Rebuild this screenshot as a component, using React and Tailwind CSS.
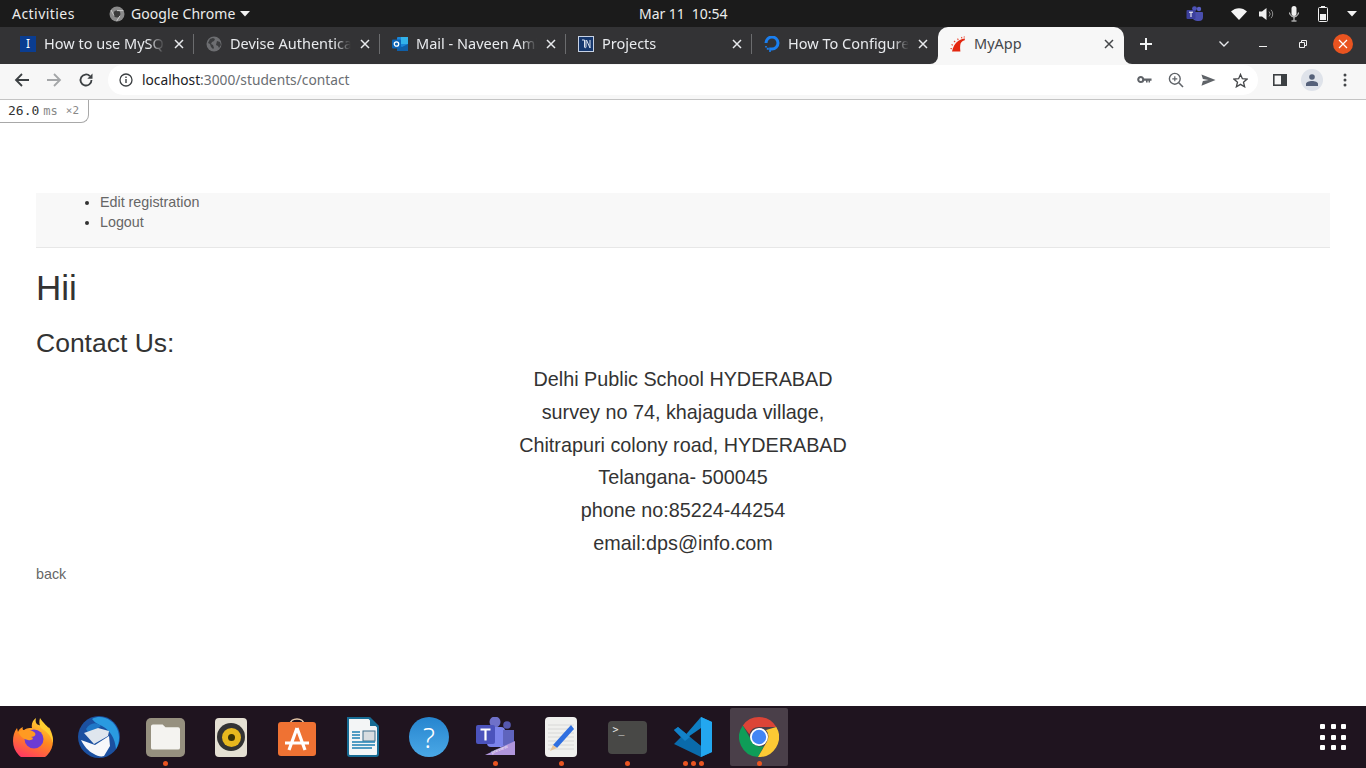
import React from "react";

const ui = { fontFamily: '"Noto Sans", "Open Sans", sans-serif' };
const page = { fontFamily: '"Liberation Sans", Arial, sans-serif' };

const Rails = () => (
  <svg viewBox="0 0 16 16" className="h-4 w-4">
    <path d="M2 15.5C3 11 5 7 8.5 4.8 10.5 3.6 12.5 3 15 2.6l-.3 1.6C12.6 4.8 11.3 5.8 10.6 7.5 10 9.7 10 12.5 10.4 15.5z" fill="#e3260f" />
    <path d="M4 5l1.2 1.2M7.5 2.6l.8 1.3M11.5 1l.4 1.4M1.5 8.5l1.4.7M0.5 12.5l1.5.3M14 .5l.4 1" stroke="#e8442f" strokeWidth="1.1" />
  </svg>
);
const Fav1 = () => (
  <div className="flex h-4 w-4 items-center justify-center bg-[#0a3d91] text-[12px] leading-none text-white">I</div>
);
const Globe = () => (
  <svg viewBox="0 0 16 16" className="h-4 w-4">
    <circle cx="8" cy="8" r="7.5" fill="#6d6e71" />
    <path d="M4 3l3-1 2 1-1 2-2 1-1 2 2 1 1 3-1 1-2-2-1-3-2-1zM11 5l3 1 1 3-2 3-1-2-2-1z" fill="#3b3c3e" />
  </svg>
);
const Outlook = () => (
  <svg viewBox="0 0 16 16" className="h-4 w-4">
    <rect x="5" y="1" width="11" height="14" rx="1" fill="#1a86d8" />
    <path d="M9 1h7v7H9z" fill="#32b2ea" />
    <path d="M5 8l5 3 6-3v7H5z" fill="#0f5fa8" />
    <rect x="0" y="3.5" width="9" height="9" rx="1" fill="#0b63b5" />
    <circle cx="4.5" cy="8" r="2.2" fill="none" stroke="#fff" strokeWidth="1.3" />
  </svg>
);
const Notion = () => (
  <svg viewBox="0 0 16 16" className="h-4 w-4">
    <rect x="0.5" y="0.5" width="15" height="15" fill="#16386e" stroke="#c7d2e4" />
    <path d="M4 4h2.5v7c0 1 1.5 1 1.5 0V4M8.5 4l3.5 8V4" fill="none" stroke="#dfe6f2" strokeWidth="1" />
  </svg>
);
const DO = () => (
  <svg viewBox="0 0 16 16" className="h-4 w-4">
    <path d="M8 14.5v-3a4.5 4.5 0 1 0-4.5-4.5H.5A7.5 7.5 0 1 1 8 14.5z" fill="#1a7ff0" />
    <path d="M5.2 11.5H8v3H5.2zM2.8 11.8h2v2h-2zM5.2 14.2h1.6V16H5.2zM1.2 10H2.8v1.6H1.2z" fill="#1a7ff0" />
  </svg>
);
const TabClose = ({ dark }) => (
  <svg viewBox="0 0 10 10" className="h-[10px] w-[10px]">
    <path d="M1 1l8 8M9 1l-8 8" stroke={dark ? "#45474a" : "#e8eaed"} strokeWidth="1.5" />
  </svg>
);

const tabs = [
  { t: "How to use MySQL with Rails", i: <Fav1 /> },
  { t: "Devise Authentication in Rails", i: <Globe /> },
  { t: "Mail - Naveen Ambati - Outlook", i: <Outlook /> },
  { t: "Projects", i: <Notion /> },
  { t: "How To Configure Devise", i: <DO /> },
];

function Tab({ t, i, last }) {
  return (
    <div className="relative flex h-[37px] w-[186px] shrink-0 items-center pb-[3px] pl-3">
      <div className="shrink-0">{i}</div>
      <div className="ml-2 w-[122px] -translate-y-px overflow-hidden whitespace-nowrap text-[14.5px] leading-5 text-[#e8eaed] [mask-image:linear-gradient(to_right,black_86%,transparent_99%)]">{t}</div>
      <div className="ml-2 flex w-[10px] items-center"><TabClose /></div>
      {!last && <div className="absolute right-0 top-[7px] h-[20px] w-px bg-[#6b6c6e]" />}
    </div>
  );
}

function Caret({ className }) {
  return (
    <svg viewBox="0 0 10 6" className={className}>
      <path d="M0 0h10L5 5.5z" fill="#f2f2f2" />
    </svg>
  );
}

function TopBar() {
  return (
    <div style={ui} className="relative flex h-[27px] shrink-0 items-center bg-[#1b1b1b] text-[14px] text-[#ececec]">
      <span className="ml-3 w-[97px] tracking-[0.45px]">Activities</span>
      <svg viewBox="0 0 16 16" className="h-4 w-4">
        <circle cx="8" cy="8" r="7.5" fill="#8a8a8a" />
        <circle cx="8" cy="8" r="3.4" fill="#3b3b3b" />
        <path d="M8 4.6h6.4M5 9.7L2 4M11 9.7l-3.4 5.5" stroke="#c9c9c9" strokeWidth="1" />
      </svg>
      <span className="ml-[6px] tracking-[0.08px]">Google Chrome</span>
      <Caret className="ml-[5px] h-[6px] w-[10px]" />
      <span className="absolute left-[639px] top-[3px] tracking-[-0.05px]">Mar 11&nbsp;&nbsp;10:54</span>
      <div className="ml-auto flex items-center">
        <svg viewBox="0 0 18 16" className="h-[16px] w-[18px]">
          <circle cx="13" cy="3" r="2.2" fill="#5a5fc4" />
          <circle cx="8.5" cy="2.6" r="2.4" fill="#4d52b8" />
          <path d="M6 6h10a1 1 0 0 1 1 1v4a4 4 0 0 1-4 4h-2a5 5 0 0 1-5-5z" fill="#4a4fae" />
          <rect x="0.5" y="4" width="9" height="9" rx="1" fill="#3c409c" />
          <path d="M3 6.2h4M5 6.2v4.8" stroke="#fff" strokeWidth="1" />
        </svg>
        <svg viewBox="0 0 16 12" className="ml-[27px] h-[12px] w-[16px]">
          <path d="M0 3.5C4.5-1 11.5-1 16 3.5L8 12z" fill="#f4f4f4" />
        </svg>
        <svg viewBox="0 0 16 14" className="ml-[12px] h-[14px] w-[16px]">
          <path d="M0 4.5h3L7.5 1v12L3 9.5H0z" fill="#f0f0f0" />
          <path d="M10 4.5a3.5 3.5 0 0 1 0 5M12 2.8a6 6 0 0 1 0 8.4" stroke="#8e8e8e" fill="none" strokeWidth="1" />
        </svg>
        <svg viewBox="0 0 10 16" className="ml-[14px] h-[16px] w-[10px]">
          <rect x="2.5" y="0" width="5" height="10" rx="2.5" fill="#f0f0f0" />
          <path d="M0.6 6.5a4.4 4.4 0 0 0 8.8 0M5 11v3.5M2.5 15h5" stroke="#f0f0f0" fill="none" strokeWidth="1" />
        </svg>
        <svg viewBox="0 0 10 16" className="ml-[19px] h-[16px] w-[10px]">
          <rect x="3" y="0" width="4" height="2" fill="#f0f0f0" />
          <rect x="0.5" y="1.5" width="9" height="14" rx="1" fill="none" stroke="#f0f0f0" />
          <rect x="2" y="8" width="6" height="6" fill="#f0f0f0" />
        </svg>
        <Caret className="ml-[19px] mr-[9px] h-[6px] w-[10px]" />
      </div>
    </div>
  );
}

function TabBar() {
  return (
    <div style={ui} className="flex h-[37px] shrink-0 items-start bg-[#333335] pl-2">
      {tabs.map((x, n) => (
        <Tab key={n} {...x} last={n === 4} />
      ))}
      <div className="relative flex h-[37px] w-[186px] shrink-0 items-center rounded-t-[10px] bg-[#f7f7f7] pb-[3px] pl-3">
        <div className="absolute bottom-0 left-[-8px] h-2 w-2 bg-[#f7f7f7]"><div className="h-full w-full rounded-br-[8px] bg-[#333335]" /></div>
        <div className="absolute bottom-0 right-[-8px] h-2 w-2 bg-[#f7f7f7]"><div className="h-full w-full rounded-bl-[8px] bg-[#333335]" /></div>
        <Rails />
        <div className="ml-2 w-[122px] -translate-y-px text-[14.5px] leading-5 text-[#45474a]">MyApp</div>
        <div className="ml-2 flex w-[10px]"><TabClose dark /></div>
      </div>
      <div className="ml-4 flex h-[34px] w-[14px] items-center">
        <svg viewBox="0 0 12 12" className="h-3 w-3"><path d="M6 0v12M0 6h12" stroke="#f1f3f4" strokeWidth="2" /></svg>
      </div>
      <div className="ml-[65px] flex h-[34px] items-center">
        <svg viewBox="0 0 10 6" className="h-[6px] w-[10px]"><path d="M0.5 0.5L5 5l4.5-4.5" fill="none" stroke="#e8eaed" strokeWidth="1.4" /></svg>
      </div>
      <div className="ml-[30px] flex h-[34px] items-center pt-[5px]">
        <div className="h-px w-2 bg-[#f0f0f0]" />
      </div>
      <div className="ml-[32px] flex h-[34px] items-center">
        <svg viewBox="0 0 8 8" className="h-2 w-2"><path d="M0.5 2.5h5v5h-5zM2.5 2.5V0.5h5v5h-2" fill="none" stroke="#f0f0f0" strokeWidth="1" /></svg>
      </div>
      <div className="ml-[26px] mt-[7px] flex h-5 w-5 items-center justify-center rounded-full bg-[#e95420]">
        <svg viewBox="0 0 10 10" className="h-[10px] w-[10px]"><path d="M1 1l8 8M9 1l-8 8" stroke="#fff" strokeWidth="1.2" /></svg>
      </div>
    </div>
  );
}

const OmniSlot = ({ children }) => <div className="flex h-[30px] w-8 items-center justify-center">{children}</div>;

function Toolbar() {
  const c = "#5f6368";
  return (
    <div style={ui} className="flex h-[36px] shrink-0 items-center border-b border-[#c4c4c4] bg-[#f7f7f7] pb-1 pt-px">
      <svg viewBox="0 0 16 16" className="ml-[14px] h-4 w-4"><path d="M15 8H2M8 2L2 8l6 6" fill="none" stroke="#3c4043" strokeWidth="1.8" /></svg>
      <svg viewBox="0 0 16 16" className="ml-4 h-4 w-4"><path d="M1 8h13M8 2l6 6-6 6" fill="none" stroke="#a4a6a8" strokeWidth="1.8" /></svg>
      <svg viewBox="0 0 16 16" className="ml-4 h-4 w-4">
        <path d="M13.5 8a5.5 5.5 0 1 1-1.6-3.9" fill="none" stroke="#3c4043" strokeWidth="1.8" />
        <path d="M14.5 1.5v5.2H9.3z" fill="#3c4043" />
      </svg>
      <div className="ml-[14px] flex h-[30px] w-[1150px] items-center rounded-full bg-white pl-[11px]">
        <svg viewBox="0 0 14 14" className="h-[14px] w-[14px]">
          <circle cx="7" cy="7" r="6" fill="none" stroke="#3c4043" strokeWidth="1.3" />
          <path d="M7 6v4M7 3.6v1.4" stroke="#3c4043" strokeWidth="1.4" />
        </svg>
        <span className="ml-[9px] text-[13.75px] text-[#202124]">localhost<span className="text-[#6a6e72]">:3000/students/contact</span></span>
        <div className="ml-auto mr-[2px] flex items-center">
          <OmniSlot>
            <svg viewBox="0 0 16 10" className="h-[10px] w-[15px]">
              <circle cx="4" cy="4.5" r="2.7" fill="none" stroke={c} strokeWidth="2.2" />
              <path d="M6 3.5h9.5v2.2h-1.6v2h-1.6v-2h-1v2H9.6v-2H6z" fill={c} />
            </svg>
          </OmniSlot>
          <OmniSlot>
            <svg viewBox="0 0 16 16" className="h-4 w-4">
              <circle cx="6.8" cy="6.8" r="5.4" fill="none" stroke={c} strokeWidth="1.4" />
              <path d="M10.8 10.8L15 15" stroke={c} strokeWidth="1.6" />
              <path d="M6.8 4.3v5M4.3 6.8h5" stroke={c} strokeWidth="1.2" />
            </svg>
          </OmniSlot>
          <OmniSlot>
            <svg viewBox="0 0 16 12" className="h-[12px] w-[15px]"><path d="M0.5 0L15.5 6 0.5 12l1.5-5 6-1-6-1z" fill={c} /></svg>
          </OmniSlot>
          <OmniSlot>
            <svg viewBox="0 0 16 16" className="h-[15px] w-[15px]"><path d="M8 1.5l2 4.6 5 .4-3.8 3.3 1.2 4.9L8 12.1l-4.4 2.6 1.2-4.9L1 6.5l5-.4z" fill="none" stroke="#45474a" strokeWidth="1.4" /></svg>
          </OmniSlot>
        </div>
      </div>
      <svg viewBox="0 0 14 12" className="ml-[15px] h-[12px] w-[14px]">
        <rect x="0.8" y="0.8" width="12.4" height="10.4" fill="none" stroke="#3c4043" strokeWidth="1.6" />
        <rect x="8" y="1" width="5" height="10" fill="#3c4043" />
      </svg>
      <div className="ml-[14px] flex h-[22px] w-[22px] items-center justify-center rounded-full bg-[#dfe3ea]">
        <svg viewBox="0 0 12 12" className="h-3 w-3">
          <circle cx="6" cy="3" r="2.8" fill="#55617a" />
          <path d="M0 12V10c0-2 3-3 6-3s6 1 6 3v2z" fill="#55617a" />
        </svg>
      </div>
      <svg viewBox="0 0 4 14" className="ml-5 h-[14px] w-[4px]">
        <circle cx="2" cy="2" r="1.5" fill="#45474a" /><circle cx="2" cy="7" r="1.5" fill="#45474a" /><circle cx="2" cy="12" r="1.5" fill="#45474a" />
      </svg>
    </div>
  );
}

const DockIcon = ({ children, dots = 0, active }) => (
  <div className={`relative mx-1 flex h-[58px] w-[58px] shrink-0 items-center justify-center ${active ? "rounded-[2px] bg-[#4a3f49]" : ""}`}>
    {children}
    {dots > 0 && (
      <div className="absolute bottom-0 flex gap-[3px]">
        {Array.from({ length: dots }).map((_, i) => (
          <span key={i} className="h-[5px] w-[5px] rounded-full bg-[#e95420]" />
        ))}
      </div>
    )}
  </div>
);

function Dock() {
  return (
    <div className="flex h-[62px] shrink-0 items-center bg-[#1f141f]">
      <DockIcon>
        <svg viewBox="0 0 40 40" className="h-10 w-10">
          <defs>
            <linearGradient id="ffa" x1="0.7" y1="0" x2="0.3" y2="1">
              <stop offset="0" stopColor="#ffdc3a" />
              <stop offset="0.45" stopColor="#ff8a1e" />
              <stop offset="1" stopColor="#ff2f6a" />
            </linearGradient>
          </defs>
          <path d="M23 1c-1 4 0 6 3 7 4 2 6 0 8 1 1 3 2 0 3 3 2 4 3 8 3 12a20 20 0 0 1-40 0c0-5 1-9 4-13l1 4c1-3 3-4 5-5-1 2 0 3 1 3 3-2 5-2 8-2-1-4 1-8 4-10z" fill="url(#ffa)" />
          <path d="M27 1c3 5 8 8 11 15 2 4 2 8 2 10-2-8-7-12-12-15-2-3-2-7-1-10z" fill="#ffcf30" />
          <circle cx="21" cy="22" r="9.5" fill="#6b3bd4" />
          <path d="M5 15c5-3 12-3 16 0 3 2 1 5-3 5 4 1 1 4-3 3-5-1-8-4-10-8z" fill="#ff9a22" />
        </svg>
      </DockIcon>
      <DockIcon>
        <svg viewBox="0 0 42 42" className="h-[42px] w-[42px]">
          <circle cx="21" cy="21" r="21" fill="#1b50a0" />
          <path d="M14 3c9-5 22 0 26 12 2 7 1 13-2 18-1-11-6-19-14-23-4-2-7-3-10-7z" fill="#2a9ae0" />
          <path d="M8 13c3-5 8-7 12-5l3 2-12 8z" fill="#1f78c8" />
          <path d="M6 17l14-5 11 3-1 5-14 8z" fill="#dfe6ee" />
          <path d="M3 24l14 5 14-9 1 10-6 10c-3 1-7 0-10-2-6-3-10-8-13-14z" fill="#f7f8fa" />
        </svg>
      </DockIcon>
      <DockIcon dots={1}>
        <div className="flex h-[39px] w-[39px] items-center justify-center rounded-[5px] bg-[#96907f]">
          <svg viewBox="0 0 30 26" className="h-[26px] w-[29px]">
            <path d="M2 0h10l3 3h13a2 2 0 0 1 2 2v19a2 2 0 0 1-2 2H2a2 2 0 0 1-2-2V2a2 2 0 0 1 2-2z" fill="#f4f3f0" />
          </svg>
        </div>
      </DockIcon>
      <DockIcon>
        <div className="flex h-[39px] w-8 items-center justify-center rounded-[4px] bg-[#e5e0d3]">
          <div className="flex h-7 w-7 items-center justify-center rounded-full bg-[#333]">
            <div className="flex h-[19px] w-[19px] items-center justify-center rounded-full bg-[#e8b81e]">
              <div className="h-[7px] w-[7px] rounded-full bg-[#3a3205]" />
            </div>
          </div>
        </div>
      </DockIcon>
      <DockIcon>
        <svg viewBox="0 0 40 40" className="h-10 w-10">
          <path d="M13 8c0-8 14-8 14 0" fill="none" stroke="#e8c9a8" strokeWidth="1.6" />
          <rect x="1" y="5" width="38" height="34" rx="3" fill="#ef7233" />
          <path d="M20 11l-8 22M20 11l8 22M8 26h24" stroke="#fff" strokeWidth="3.2" fill="none" />
        </svg>
      </DockIcon>
      <DockIcon>
        <svg viewBox="0 0 32 40" className="h-10 w-8">
          <path d="M1 1h21l9 9v27a2 2 0 0 1-2 2H3a2 2 0 0 1-2-2z" fill="#f3f5f6" stroke="#176c94" strokeWidth="2" />
          <path d="M23 0l9 9h-9z" fill="#176c94" />
          <rect x="16" y="14" width="12" height="10" fill="#d8dde0" stroke="#3f6f8a" />
          <path d="M5 15h8M5 18h8M5 21h8M5 25h23M5 28h23M5 31h20" stroke="#1c7fb3" strokeWidth="1.6" />
        </svg>
      </DockIcon>
      <DockIcon>
        <div style={ui} className="flex h-10 w-10 items-center justify-center rounded-full bg-linear-to-b from-[#2585cf] to-[#4aa8e6] text-[28px] font-light leading-none text-white">?</div>
      </DockIcon>
      <DockIcon dots={1}>
        <svg viewBox="0 0 40 40" className="h-10 w-10">
          <circle cx="20" cy="5" r="5.5" fill="#6f71c9" />
          <circle cx="32" cy="8" r="3.8" fill="#5558af" />
          <rect x="12" y="10" width="18" height="20" rx="4" fill="#7b83eb" />
          <path d="M28 13h11v12a6 6 0 0 1-11 3z" fill="#5f64bd" />
          <rect x="1" y="8" width="19" height="19" rx="2" fill="#4b53bc" />
          <path d="M5.5 12.5h10M10.5 12.5v11" stroke="#fff" strokeWidth="2.2" />
          <path d="M10 39L40 25v14z" fill="#b096dc" transform="translate(0 -1)" />
          <text x="17" y="37" fontSize="5" fill="#f0eafa" fontFamily="Liberation Sans" transform="rotate(-22 17 37)">preview</text>
        </svg>
      </DockIcon>
      <DockIcon dots={1}>
        <svg viewBox="0 0 32 40" className="h-10 w-8">
          <rect width="32" height="40" rx="4" fill="#f0f0ee" />
          <path d="M3 8h26M3 12h26M3 16h26M3 20h26M3 24h26M3 28h26M3 32h26" stroke="#d2d2d0" strokeWidth="0.8" />
          <path d="M26 8l3 4L12 31l-4-3z" fill="#2f6fe0" />
          <path d="M8 28l4 3-7 3z" fill="#e5c49a" />
        </svg>
      </DockIcon>
      <DockIcon dots={1}>
        <div style={{ fontFamily: '"DejaVu Sans Mono", monospace' }} className="flex h-[33px] w-[39px] rounded-[4px] bg-[#484846] pl-[5px] pt-[2px] text-[10px] leading-[14px] text-[#e8e8e8]">&gt;_</div>
      </DockIcon>
      <DockIcon dots={3}>
        <svg viewBox="0 0 38 40" className="h-10 w-[38px]">
          <path d="M27 0l11 5v30l-11 5-19-18z" fill="#0e7fc4" />
          <path d="M27 0l11 5v30l-11 5z" fill="#23a7ef" />
          <path d="M27 11v18L14 20z" fill="#1f141f" />
          <path d="M0 13l4-3 23 19v11L0 27l7-7z" fill="#0a6bab" />
          <path d="M0 13l4-3 12 10-5 4z" fill="#1282c9" />
        </svg>
      </DockIcon>
      <DockIcon dots={1} active>
        <svg viewBox="0 0 40 40" className="h-10 w-10">
          <path d="M20 0a20 20 0 0 1 17.3 10H20a10 10 0 0 0-9.6 7.2L3.8 8.4A20 20 0 0 1 20 0z" fill="#db4437" />
          <path d="M3.8 8.4l8.7 15A10 10 0 0 0 25 29l-6 11A20 20 0 0 1 3.8 8.4z" fill="#0f9d58" />
          <path d="M37.3 10A20 20 0 0 1 19 40l8.7-15A10 10 0 0 0 27 13z" fill="#fcc934" />
          <circle cx="20" cy="20" r="9" fill="#fff" />
          <circle cx="20" cy="20" r="7.2" fill="#4285f4" />
        </svg>
      </DockIcon>
      <div className="ml-auto mr-[20px] grid grid-cols-3 gap-[5.5px]">
        {Array.from({ length: 9 }).map((_, i) => (
          <span key={i} className="h-[5px] w-[5px] rounded-[1px] bg-white" />
        ))}
      </div>
    </div>
  );
}

function Page() {
  return (
    <div style={page} className="relative min-h-0 flex-1 overflow-hidden bg-white px-9 pt-[93px] text-[#333]">
      <div className="absolute left-0 top-0 flex h-[23px] w-[89px] items-center rounded-br-[8px] border-b border-r border-[#a8a8a8] bg-white pl-2" style={{ fontFamily: '"DejaVu Sans Mono", monospace' }}>
        <span className="text-[13px] text-[#333]">26.0</span>
        <span className="ml-1 text-[12px] text-[#888]">ms</span>
        <span className="ml-2 text-[11px] text-[#888]">×2</span>
      </div>
      <nav className="h-[55px] border-b border-[#e7e7e7] bg-[#f8f8f8]">
        <ul className="list-disc pl-16 text-[14.3px] leading-5 marker:text-[#333]">
          <li className="-translate-y-px"><a className="text-[#666]">Edit registration</a></li>
          <li className="-translate-y-px"><a className="text-[#666]">Logout</a></li>
        </ul>
      </nav>
      <h1 className="mt-5 text-[35px] font-normal leading-10">Hii</h1>
      <h3 className="mt-5 text-[26.5px] font-normal leading-[30px]">Contact Us:</h3>
      <div className="mt-[5px] text-center text-[19.8px] leading-[32.8px]">
        <p>Delhi Public School HYDERABAD</p>
        <p>survey no 74, khajaguda village,</p>
        <p>Chitrapuri colony road, HYDERABAD</p>
        <p>Telangana- 500045</p>
        <p>phone no:85224-44254</p>
        <p>email:dps@info.com</p>
      </div>
      <a className="mt-1 block text-[14.3px] leading-5 text-[#666]">back</a>
    </div>
  );
}

export default function App() {
  return (
    <div className="flex h-screen flex-col overflow-hidden">
      <TopBar />
      <TabBar />
      <Toolbar />
      <Page />
      <Dock />
    </div>
  );
}
